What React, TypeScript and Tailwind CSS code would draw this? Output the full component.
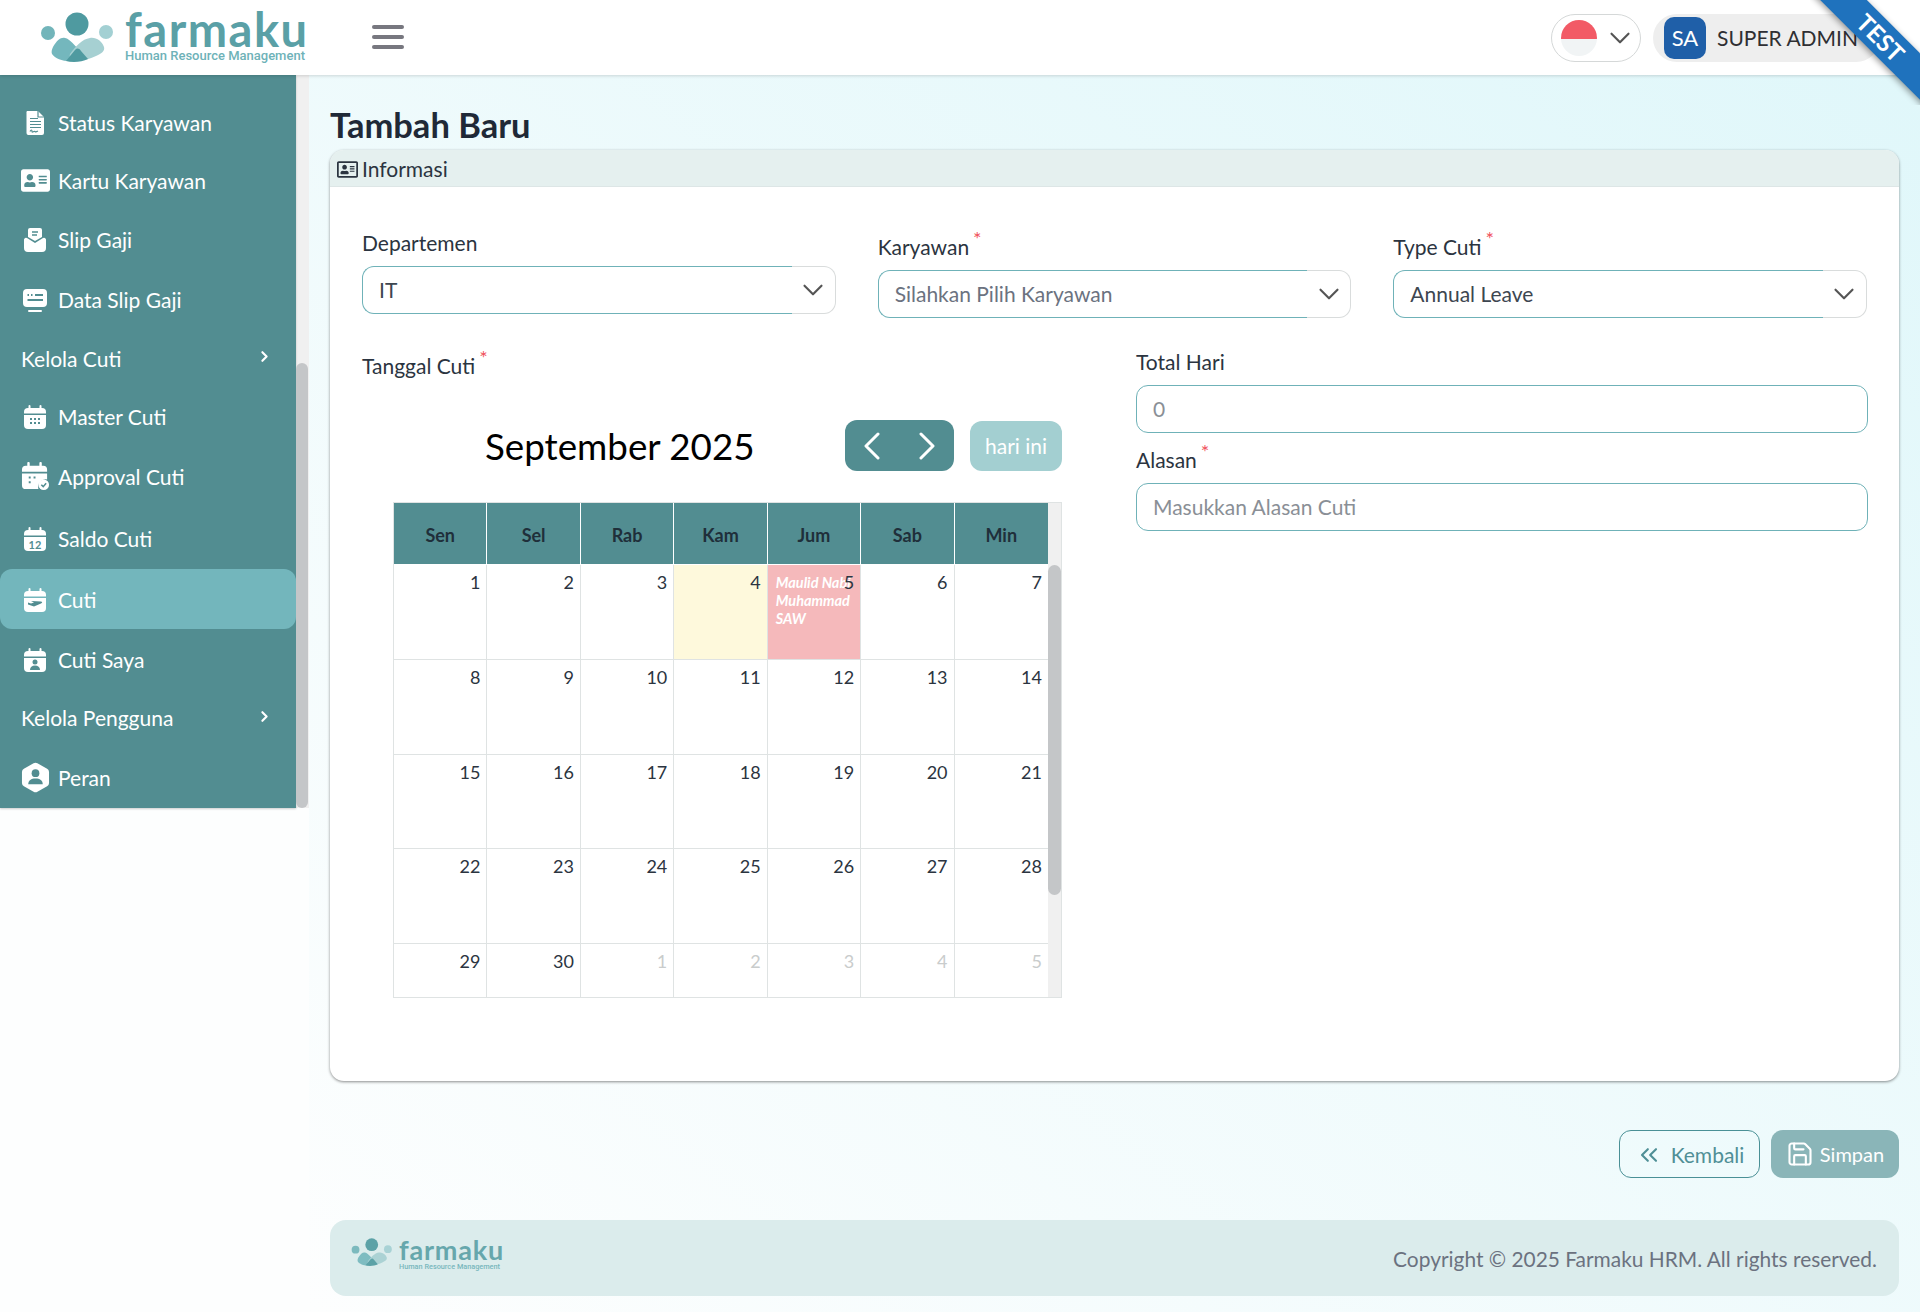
import type { ReactNode } from "react";
import { ChevronDown, ChevronRight, ChevronsLeft, Save } from "lucide-react";
import { FaAddressCard, FaRegAddressCard } from "react-icons/fa";

const TEAL = "#528d91";

function Shell({ children, className = "w-[26px] h-[26px]" }: { children: ReactNode; className?: string }) {
  return (
    <svg viewBox="0 0 26 26" className={className} fill="#fff">
      {children}
    </svg>
  );
}

// calendar outline shared by the leave menu icons
function CalTop() {
  return (
    <>
      <rect x="6.5" y="1" width="2" height="4" rx="1" />
      <rect x="17.5" y="1" width="2" height="4" rx="1" />
      <path d="M2 8a4 4 0 0 1 4-4h14a4 4 0 0 1 4 4v1.5H2z" />
    </>
  );
}

function MenuIcon({ name }: { name: string }) {
  if (name === "doc")
    return (
      <Shell>
        <path d="M5 1h11l6 6v16a2 2 0 0 1-2 2H6a2 2 0 0 1-1.500-2V3A2 2 0 0 1 5 1z" />
        <g stroke={TEAL} strokeWidth="1.200" fill="none">
          <path d="M8 8.500h8M8 11.500h11M8 14.500h11M8 17.500h11" />
          <path d="M8 21.500c1-2 2-2 2 0s2-1 3 0 2 0 3-.5" />
          <path d="M16 1v6h6" />
        </g>
      </Shell>
    );
  if (name === "card") return <FaAddressCard className="w-[29px] h-[29px] text-white" />;
  if (name === "slip")
    return (
      <Shell>
        <path d="M6 3a2 2 0 0 1 2-2h10a2 2 0 0 1 2 2v7l-7 4-7-4z" />
        <path d="M2 12.500a2 2 0 0 1 3-1.500l8 5 8-5a2 2 0 0 1 3 1.500V21a4 4 0 0 1-4 4H6a4 4 0 0 1-4-4z" />
        <path d="M10 5h6M10 8h5" stroke={TEAL} strokeWidth="1.500" />
      </Shell>
    );
  if (name === "data")
    return (
      <Shell>
        <rect x="1" y="2" width="24" height="18" rx="4" />
        <rect x="6" y="23" width="14" height="2" rx="1" />
        <path d="M5.500 8h1.500M9 8h1.500M13 8h8M5.500 13h15.500" stroke={TEAL} strokeWidth="1.800" />
      </Shell>
    );
  if (name === "hex")
    return (
      <svg viewBox="0 0 30 32" className="w-[29px] h-[31px]" fill="#fff">
        <path d="M13 1.200a4 4 0 0 1 4 0l10 5.800a4 4 0 0 1 2 3.400v11.200a4 4 0 0 1-2 3.400l-10 5.800a4 4 0 0 1-4 0L3 25a4 4 0 0 1-2-3.400V10.400A4 4 0 0 1 3 7z" />
        <circle cx="15" cy="11.500" r="4" fill={TEAL} />
        <path d="M7.500 23c0-4 3-6 7.500-6s7.500 2 7.500 6z" fill={TEAL} />
      </svg>
    );
  if (name === "approve")
    return (
      <svg viewBox="0 0 30 32" className="w-[29px] h-[31px]" fill="#fff">
        <rect x="6.500" y="1" width="2.500" height="5" rx="1" />
        <rect x="19" y="1" width="2.500" height="5" rx="1" />
        <path d="M1 9a4 4 0 0 1 4-4h18a4 4 0 0 1 4 4v2H1z" />
        <path d="M1 13h26v6a8 8 0 0 0-9 10H5a4 4 0 0 1-4-4z" />
        <circle cx="23.500" cy="24.500" r="5.500" />
        <path d="M21 24.500l2 2 3-3.500" stroke={TEAL} strokeWidth="1.600" fill="none" />
        <path d="M8 17h2M13 17h2M8 22h2" stroke={TEAL} strokeWidth="2" />
      </svg>
    );
  return (
    <Shell>
      <CalTop />
      <path d="M2 11h22v10a4 4 0 0 1-4 4H6a4 4 0 0 1-4-4z" />
      {name === "master" && <path d="M8 15h2M12 15h2M16 15h2M8 19h2M12 19h2M16 19h2" stroke={TEAL} strokeWidth="2" />}
      {name === "twelve" && (
        <text x="13" y="23" textAnchor="middle" fontSize="11" fontWeight="700" fill={TEAL} fontFamily="Lato, sans-serif">
          12
        </text>
      )}
      {name === "plane" && <path d="M6 15.500l3 1 3-1-3-1.500 10 .5c2 .5 1 1.500 0 2l-7 3-6-2z" fill={TEAL} />}
      {name === "person" && (
        <>
          <circle cx="13" cy="15" r="2.500" fill={TEAL} />
          <path d="M8 23c0-3 2-4.500 5-4.500s5 1.500 5 4.500z" fill={TEAL} />
        </>
      )}
    </Shell>
  );
}

const menu = [
  { label: "Status Karyawan", icon: "doc", h: "h-[59px]" },
  { label: "Kartu Karyawan", icon: "card", h: "h-[57px]" },
  { label: "Slip Gaji", icon: "slip", h: "h-[61px]" },
  { label: "Data Slip Gaji", icon: "data", h: "h-[59px]" },
  { label: "Kelola Cuti", group: true, h: "h-[59px]" },
  { label: "Master Cuti", icon: "master", h: "h-[57px]" },
  { label: "Approval Cuti", icon: "approve", h: "h-[63px]" },
  { label: "Saldo Cuti", icon: "twelve", h: "h-[62px]" },
  { label: "Cuti", icon: "plane", h: "h-[60px]", active: true },
  { label: "Cuti Saya", icon: "person", h: "h-[60px]" },
  { label: "Kelola Pengguna", group: true, h: "h-[56px]" },
  { label: "Peran", icon: "hex", h: "h-[63px]" },
];

function Logo({ small = false }: { small?: boolean }) {
  return (
    <div className={small ? "flex items-start gap-[6px]" : "flex items-start gap-[10px]"}>
      <svg viewBox="0 0 75 52" className={small ? "w-[42px] h-[29px]" : "w-[75px] h-[52px]"}>
        <circle cx="37" cy="12" r="11.500" fill="#4f9aa0" />
        <circle cx="8" cy="21" r="7" fill="#72b5ba" />
        <circle cx="66" cy="20" r="7" fill="#a3d0d3" />
        <path d="M13 35c4-7 8-10 12-9 3 .5 6 3 16 14 2 2 2 6-3 8-10 3-22 0-26-6-1-2 0-5 1-7z" fill="#74b7bd" />
        <path d="M30 42c6-8 12-15 20-16 6-1 12 3 14 9 1 4-2 6-8 9-8 4-18 6-24 3-2-1-3-3-2-5z" fill="#a6d0d2" />
        <path d="M26 49l9-11c2-2 4-2 6 1l7 8c-6 3-15 4-22 2z" fill="#4f9aa0" />
      </svg>
      <div className={small ? "flex flex-col" : "flex flex-col -mt-[3px]"}>
        <span
          className={
            small
              ? "font-['Lato',sans-serif] font-bold text-[#5aa0a6] text-[27px] leading-[24px] tracking-[0.8px]"
              : "font-['Lato',sans-serif] font-bold text-[#5aa0a6] text-[47px] leading-[40px] tracking-[1.500px]"
          }
        >
          farmaku
        </span>
        <span
          className={
            small
              ? "font-['Roboto',sans-serif] font-medium text-[#6eb2b8] text-[7.300px] leading-[9px] whitespace-nowrap"
              : "font-['Roboto',sans-serif] font-medium text-[#6eb2b8] text-[13px] leading-[14px] whitespace-nowrap"
          }
        >
          Human Resource Management
        </span>
      </div>
    </div>
  );
}

function Header() {
  return (
    <header className="relative z-10 h-[75px] bg-white shadow-[0_1px_3px_rgba(0,0,0,0.15)] flex items-center pl-[40px] pr-[40px]">
      <Logo />
      <div className="ml-[63px] mb-[2px] flex flex-col gap-[6px] w-[32px]">
        <div className="h-[4px] rounded bg-[#77777f]" />
        <div className="h-[4px] rounded bg-[#77777f]" />
        <div className="h-[4px] rounded bg-[#77777f]" />
      </div>
      <div className="ml-auto flex items-center gap-[12px]">
        <div className="w-[90px] h-[48px] rounded-full border border-[#d5d8d8] flex items-center pl-[9px] gap-[6px]">
          <div className="w-[36px] h-[36px] rounded-full overflow-hidden flex flex-col">
            <div className="h-[19px] bg-[#f25a66]" />
            <div className="flex-1 bg-[#f1f4f5]" />
          </div>
          <ChevronDown className="w-[34px] h-[34px] text-[#555]" strokeWidth={1.500} />
        </div>
        <div className="w-[227px] h-[48px] rounded-full bg-[#eeeeee] flex items-center pl-[11px] gap-[11px]">
          <div className="w-[42px] h-[42px] rounded-[10px] bg-[#1f5fa8] text-white text-[22px] flex items-center justify-center">
            SA
          </div>
          <span className="text-[#2f2f33] text-[21px]">SUPER ADMIN</span>
        </div>
      </div>
      {/* corner ribbon */}
      <div className="absolute right-0 top-0 w-[110px] h-[105px] overflow-hidden pointer-events-none">
        <div className="absolute left-[-14px] top-[21px] w-[170px] h-[33px] rotate-45 bg-[#1f72bd] shadow-[0_2px_6px_rgba(0,0,0,0.4)] text-white font-bold text-[24px] flex items-center justify-center">
          TEST
        </div>
      </div>
    </header>
  );
}

function Sidebar() {
  return (
    <aside className="w-[309px] shrink-0 bg-[#fdfefe]">
      <div className="flex h-[733px] bg-[#f0f0f0]">
        <nav className="w-[296px] bg-[#528d91] pt-[17px] text-white text-[21px] shadow-[0_1px_2px_rgba(0,0,0,0.2)]">
          {menu.map((m) => (
            <div
              key={m.label}
              className={`${m.h} pt-[2px] flex items-center ${m.group ? "pl-[21px] pr-[23px]" : "pl-[20px]"} ${
                m.active ? "bg-[#73b6bc] rounded-[12px]" : ""
              }`}
            >
              {m.icon && (
                <span className="w-[30px] mr-[8px] flex justify-center">
                  <MenuIcon name={m.icon} />
                </span>
              )}
              <span>{m.label}</span>
              {m.group && <ChevronRight className="ml-auto w-[17px] h-[17px] mb-[4px]" strokeWidth={3} />}
            </div>
          ))}
        </nav>
        <div className="w-[12px] pt-[288px]">
          <div className="h-[445px] bg-[#c4c6c8] rounded-full" />
        </div>
      </div>
    </aside>
  );
}

function Label({ text, required = false }: { text: string; required?: boolean }) {
  return (
    <div className={`${required ? "h-[32px]" : "h-[28px]"} mb-[9px] flex items-end text-[21px] leading-[28px] text-[#2b3440]`}>
      <span>{text}</span>
      {required && <span className="self-start ml-[4px] mt-[2px] text-[#f0525c] text-[20px] leading-[14px]">*</span>}
    </div>
  );
}

function SelectBox({ value, muted = false }: { value: string; muted?: boolean }) {
  return (
    <div className="flex h-[48px] text-[21px]">
      <div className={`flex-1 flex items-center pl-[16px] rounded-l-[12px] border border-r-0 border-[#6fb2b8] ${muted ? "text-[#6b7280]" : "text-[#3d4650]"}`}>
        {value}
      </div>
      <div className="w-[44px] flex items-center justify-center rounded-r-[12px] border border-l-0 border-[#d9dcdc]">
        <ChevronDown className="shrink-0 w-[34px] h-[34px] text-[#555]" strokeWidth={1.500} />
      </div>
    </div>
  );
}

function TextInput({ placeholder }: { placeholder: string }) {
  return (
    <div className="h-[48px] rounded-[12px] border border-[#6fb2b8] flex items-center pl-[16px] text-[21px] text-[#8a8f96]">
      {placeholder}
    </div>
  );
}

const days = ["Sen", "Sel", "Rab", "Kam", "Jum", "Sab", "Min"];
const weeks = [
  [1, 2, 3, 4, 5, 6, 7],
  [8, 9, 10, 11, 12, 13, 14],
  [15, 16, 17, 18, 19, 20, 21],
  [22, 23, 24, 25, 26, 27, 28],
  [29, 30, 1, 2, 3, 4, 5],
];

function Calendar() {
  return (
    <div className="ml-[31px] w-[669px] mt-[40px]">
      <div className="h-[51px] flex items-center">
        <div className="ml-[92px] pt-[2px] text-[36.750px] leading-none text-black">September 2025</div>
        <div className="ml-auto flex items-center gap-[16px]">
          <div className="w-[109px] h-[51px] rounded-[12px] bg-[#528d91] flex items-center justify-between px-[18px]">
            <svg viewBox="0 0 18 28" className="w-[18px] h-[28px]" fill="none" stroke="#fff" strokeWidth="3" strokeLinecap="round" strokeLinejoin="round">
              <path d="M15 2 3 14l12 12" />
            </svg>
            <svg viewBox="0 0 18 28" className="w-[18px] h-[28px]" fill="none" stroke="#fff" strokeWidth="3" strokeLinecap="round" strokeLinejoin="round">
              <path d="M3 2l12 12L3 26" />
            </svg>
          </div>
          <div className="w-[92px] h-[50px] rounded-[12px] bg-[#a3cfd1] text-white text-[21px] flex items-center justify-center">
            hari ini
          </div>
        </div>
      </div>
      <div className="mt-[31px] border border-[#dfe3e3] flex">
        <div className="w-[654px]">
          <div className="grid grid-cols-7 h-[62px] bg-[#528d91]">
            {days.map((d, i) => (
              <div
                key={d}
                className={`flex items-center justify-center font-bold text-[18px] text-[#1f2f3a] pt-[4px] border-b border-white ${i < 6 ? "border-r" : ""}`}
              >
                {d}
              </div>
            ))}
          </div>
          {weeks.map((week, w) => (
            <div key={w} className={`grid grid-cols-7 ${w === 4 ? "h-[53px]" : "h-[94.800px] border-b border-[#dfe3e3]"}`}>
              {week.map((n, i) => {
                const other = w === 4 && i > 1;
                const today = w === 0 && i === 3;
                const holiday = w === 0 && i === 4;
                return (
                  <div
                    key={i}
                    className={`relative pr-[6px] pt-[4px] text-right text-[18px] leading-[27px] ${
                      i < 6 ? "border-r border-[#dfe3e3]" : ""
                    } ${other ? "text-[#c9cccc]" : "text-[#2b3440]"} ${today ? "bg-[#fef9dc]" : ""} ${holiday ? "bg-[#f5b9bb]" : ""}`}
                  >
                    {holiday && (
                      <div className="absolute left-[8px] top-[9px] w-[84px] text-left italic font-bold text-white text-[14.500px] leading-[18px]">
                        Maulid Nabi Muhammad SAW
                      </div>
                    )}
                    <span className="relative">{n}</span>
                  </div>
                );
              })}
            </div>
          ))}
        </div>
        <div className="flex-1 bg-[#f0f0f0] pt-[62px]">
          <div className="h-[330px] rounded-full bg-[#c4c6c8]" />
        </div>
      </div>
    </div>
  );
}

function Footer() {
  return (
    <div className="mt-[42px] h-[76px] rounded-[16px] bg-[#dbecec] flex items-center justify-between pl-[21px] pr-[22px]">
      <div className="opacity-90 mb-[8px]">
        <Logo small />
      </div>
      <span className="pt-[2px] text-[20.900px] text-[#6b7280]">Copyright © 2025 Farmaku HRM. All rights reserved.</span>
    </div>
  );
}

export default function App() {
  return (
    <div className="min-h-[1312px] w-[1920px] bg-[#fdfefe] font-['Lato',sans-serif]">
      <Header />
      <div className="flex">
        <Sidebar />
        <main className="flex-1 h-[1237px] px-[21px] bg-gradient-to-bl from-[#e0f7fa] to-[#fdfefe]">
          <h1 className="pt-[30px] h-[75px] text-[34.500px] font-bold leading-[40px] text-[#1f2937]">Tambah Baru</h1>
          <section className="h-[931px] rounded-[14px] bg-white shadow-[0_1px_3px_rgba(0,0,0,0.45)] overflow-hidden">
            <div className="h-[37px] pt-[2px] bg-[#e5f0ef] border-b border-[#dde6e6] flex items-center pl-[7px] gap-[4px] text-[21px] text-[#2b3440]">
              <FaRegAddressCard className="w-[21px] h-[21px]" />
              Informasi
            </div>
            <div className="px-[32px] pt-[42px]">
              <div className="grid grid-cols-3 gap-[42px]">
                <div>
                  <Label text="Departemen" />
                  <SelectBox value="IT" />
                </div>
                <div>
                  <Label text="Karyawan" required />
                  <SelectBox value="Silahkan Pilih Karyawan" muted />
                </div>
                <div>
                  <Label text="Type Cuti" required />
                  <SelectBox value="Annual Leave" />
                </div>
              </div>
              <div className="grid grid-cols-2 gap-[42px] mt-[30px] -mr-[1px]">
                <div>
                  <Label text="Tanggal Cuti" required />
                  <Calendar />
                </div>
                <div>
                  <Label text="Total Hari" />
                  <TextInput placeholder="0" />
                  <div className="mt-[9px]">
                    <Label text="Alasan" required />
                  </div>
                  <TextInput placeholder="Masukkan Alasan Cuti" />
                </div>
              </div>
            </div>
          </section>
          <div className="mt-[49px] flex justify-end gap-[11px] text-[20px]">
            <button className="w-[141px] h-[48px] pt-[1px] rounded-[12px] border border-[#4a9096] text-[#4f8f96] text-[21px] flex items-center justify-center gap-[8px]">
              <ChevronsLeft className="w-[28px] h-[28px]" strokeWidth={1.800} />
              Kembali
            </button>
            <button className="w-[128px] h-[48px] rounded-[12px] bg-[#8ab5b8] text-white flex items-center justify-center gap-[6px]">
              <Save className="w-[28px] h-[28px]" strokeWidth={1.800} />
              Simpan
            </button>
          </div>
          <Footer />
        </main>
      </div>
    </div>
  );
}
